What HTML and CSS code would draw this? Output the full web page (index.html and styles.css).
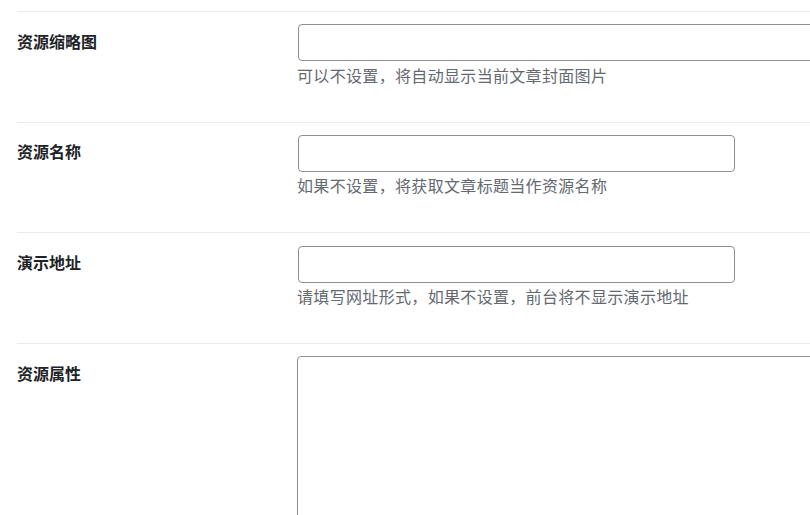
FILE: index.html
```html
<!DOCTYPE html>
<html lang="zh-CN">
<head>
<meta charset="utf-8">
<title>资源设置</title>
<link rel="stylesheet" href="styles.css">
</head>
<body>
<div class="page">
<div class="form">
  <div class="row">
    <div class="label">资源缩略图</div>
    <div class="field">
      <input class="input input-wide" type="text">
      <p class="desc">可以不设置，将自动显示当前文章封面图片</p>
    </div>
  </div>
  <div class="row">
    <div class="label">资源名称</div>
    <div class="field">
      <input class="input input-regular" type="text">
      <p class="desc">如果不设置，将获取文章标题当作资源名称</p>
    </div>
  </div>
  <div class="row">
    <div class="label">演示地址</div>
    <div class="field">
      <input class="input input-regular" type="text">
      <p class="desc">请填写网址形式，如果不设置，前台将不显示演示地址</p>
    </div>
  </div>
  <div class="row">
    <div class="label">资源属性</div>
    <div class="field">
      <textarea class="textarea"></textarea>
    </div>
  </div>
</div>
</div>
</body>
</html>
```
FILE: styles.css
```css
html, body {
  margin: 0;
  padding: 0;
  background: #ffffff;
}
body {
  font-family: "Noto Sans CJK SC", "Noto Sans", sans-serif;
  font-size: 16px;
  color: #1d2327;
}
.page {
  width: 810px;
  height: 515px;
  overflow: hidden;
}
.form {
  padding: 11px 0 0 17px;
}
.row {
  display: flex;
  border-top: 1px solid #ebebeb;
  padding: 12.3px 0 35.87px 0;
}
.label {
  width: 280px;
  flex: none;
  font-weight: 700;
  font-size: 16px;
  line-height: 24px;
  padding-top: 4.5px;
  color: #1d2327;
}
.field {
  flex: 1;
  min-width: 0;
}
.input {
  display: block;
  box-sizing: border-box;
  height: 37px;
  margin: 0 1px;
  padding: 0 8px;
  border: 1px solid #8c8f94;
  border-radius: 4px;
  background: #fff;
  font: inherit;
}
.input-wide {
  width: 640px;
}
.input-regular {
  width: 437px;
}
.desc {
  margin: 2.5px 0 0 0;
  font-size: 16px;
  line-height: 22px;
  letter-spacing: 0.33px;
  color: #646970;
}
.textarea {
  display: block;
  box-sizing: border-box;
  width: 640px;
  height: 220px;
  margin: 0;
  border: 1px solid #8c8f94;
  border-radius: 4px;
  background: #fff;
  resize: none;
  font: inherit;
}
```
